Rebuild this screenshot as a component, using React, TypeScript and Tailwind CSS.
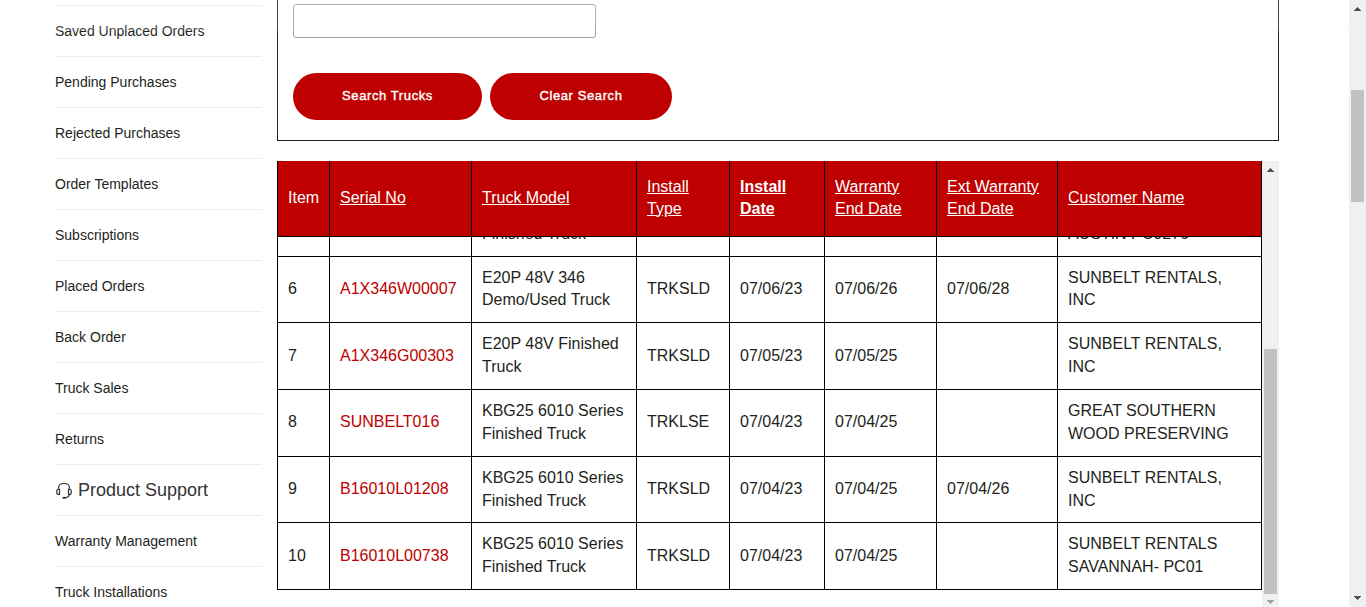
import React from "react";

const ordersMenu = [
  "Saved Unplaced Orders",
  "Pending Purchases",
  "Rejected Purchases",
  "Order Templates",
  "Subscriptions",
  "Placed Orders",
  "Back Order",
  "Truck Sales",
  "Returns",
];
const supportMenu = ["Warranty Management", "Truck Installations"];

const columns = "grid grid-cols-[52px_142px_165px_93px_95px_112px_121px_204px]";

const headers = [
  { lines: ["Item"], link: false, bold: false },
  { lines: ["Serial No"], link: true, bold: false },
  { lines: ["Truck Model"], link: true, bold: false },
  { lines: ["Install", "Type"], link: true, bold: false },
  { lines: ["Install", "Date"], link: true, bold: true },
  { lines: ["Warranty", "End Date"], link: true, bold: false },
  { lines: ["Ext Warranty", "End Date"], link: true, bold: false },
  { lines: ["Customer Name"], link: true, bold: false },
];

type Row = { size: string; single?: string; cells: string[][] };

const rows: Row[] = [
  {
    size: "h-[66px] leading-[22px]",
    cells: [["6"], ["A1X346W00007"], ["E20P 48V 346", "Demo/Used Truck"], ["TRKSLD"], ["07/06/23"], ["07/06/26"], ["07/06/28"], ["SUNBELT RENTALS,", "INC"]],
  },
  {
    size: "h-[67px] leading-[23px]",
    cells: [["7"], ["A1X346G00303"], ["E20P 48V Finished", "Truck"], ["TRKSLD"], ["07/05/23"], ["07/05/25"], [], ["SUNBELT RENTALS,", "INC"]],
  },
  {
    size: "h-[67px] leading-[23px]",
    single: "pb-[4px]",
    cells: [["8"], ["SUNBELT016"], ["KBG25 6010 Series", "Finished Truck"], ["TRKLSE"], ["07/04/23"], ["07/04/25"], [], ["GREAT SOUTHERN", "WOOD PRESERVING"]],
  },
  {
    size: "h-[66px] leading-[23px]",
    cells: [["9"], ["B16010L01208"], ["KBG25 6010 Series", "Finished Truck"], ["TRKSLD"], ["07/04/23"], ["07/04/25"], ["07/04/26"], ["SUNBELT RENTALS,", "INC"]],
  },
  {
    size: "h-[67px] leading-[23px]",
    cells: [["10"], ["B16010L00738"], ["KBG25 6010 Series", "Finished Truck"], ["TRKSLD"], ["07/04/23"], ["07/04/25"], [], ["SUNBELT RENTALS", "SAVANNAH- PC01"]],
  },
];

const clippedCells = ["", "", "Finished Truck", "", "", "", "", "AUSTIN PC0276"];

function HeadsetIcon() {
  return (
    <svg width="18" height="18" viewBox="0 0 18 18" fill="none" stroke="#333" strokeWidth="1.2" className="shrink-0">
      <path d="M3.4 7.5C3.4 4 5.6 2.5 9 2.5s5.6 1.5 5.6 5" />
      <path d="M4.5 8.1H3.7C2.6 8.1 1.8 8.9 1.8 10v1.5c0 1.2.8 2 1.9 2h.8z" />
      <path d="M13.5 8.1h.8c1.1 0 1.9.8 1.9 1.9v1.5c0 1.2-.8 2-1.9 2h-.8z" />
      <path d="M14.3 13.5c-.2 1.7-1.3 2.8-3.3 3" />
      <path d="M7.5 16.8H11" strokeWidth="1.8" />
    </svg>
  );
}

function Arrow({ up = false, muted = false }: { up?: boolean; muted?: boolean }) {
  return (
    <svg width="7" height="4" viewBox="0 0 7 4" shapeRendering="crispEdges" fill={muted ? "#a3a3a3" : "#505050"}>
      <path d={up ? "M3 0h1v1h1v1h1v1h1v1H0V3h1V2h1V1h1z" : "M0 0h7v1H6v1H5v1H4v1H3V3H2V2H1V1H0z"} />
    </svg>
  );
}

function MenuItem({ label }: { label: string }) {
  return (
    <li className="flex h-[51px] items-center border-b border-[#ececec] text-[14px] text-[#231f20]">
      <a href="#">{label}</a>
    </li>
  );
}

export default function App() {
  return (
    <div className="relative flex h-[607px] w-[1366px] overflow-hidden bg-white font-['Liberation_Sans',Arial,sans-serif] text-[#231f20]">
      <nav className="ml-[55px] w-[207px] shrink-0 pt-[5px]">
        <ul className="border-t border-[#ececec]">
          {ordersMenu.map((label) => (
            <MenuItem key={label} label={label} />
          ))}
          <li className="flex h-[51px] items-center gap-[5px] border-b border-[#ececec] text-[18px] text-[#333]">
            <HeadsetIcon />
            <span>Product Support</span>
          </li>
          {supportMenu.map((label) => (
            <MenuItem key={label} label={label} />
          ))}
        </ul>
      </nav>

      <main className="ml-[15px] flex w-[1002px] shrink-0 flex-col">
        <section className="h-[141px] border border-t-0 border-[#231f20] pl-[15px] pt-[4px]">
          <input className="block h-[34px] w-[303px] rounded-[3px] border border-[#a0a0a0] px-2 outline-none" />
          <div className="mt-[35px] flex gap-2 text-[13px] tracking-[0.6px] text-white [-webkit-text-stroke:0.4px_white]">
            <button className="h-[47px] w-[189px] rounded-full bg-[#be0000] pb-px">Search Trucks</button>
            <button className="h-[47px] w-[182px] rounded-full bg-[#be0000] pb-px">Clear Search</button>
          </div>
        </section>

        <section className="mt-5 flex h-[446px] items-start">
          <div className="w-[985px] border-l border-black text-[16px]">
            <div className={`${columns} h-[76px] border-b border-black bg-[#be0000] leading-[22px] text-white`}>
              {headers.map((h, i) => (
                <div key={i} className="flex flex-col items-start justify-center border-r border-black pb-[2px] pl-[10px]">
                  {h.lines.map((line) => (
                    <span key={line} className={`${h.link ? "underline" : ""} ${h.bold ? "font-bold" : ""}`}>
                      {line}
                    </span>
                  ))}
                </div>
              ))}
            </div>
            <div className={`${columns} h-[20px] border-b border-black`}>
              {clippedCells.map((text, i) => (
                <div key={i} className="flex h-[19px] items-start overflow-hidden whitespace-nowrap border-r border-black pl-[10px]">
                  <span className="-mt-[14px] leading-[22px]">{text}</span>
                </div>
              ))}
            </div>
            {rows.map((row) => (
              <div key={row.cells[0][0]} className={`${columns} ${row.size} border-b border-black`}>
                {row.cells.map((lines, i) => (
                  <div
                    key={i}
                    className={`flex flex-col justify-center whitespace-nowrap border-r border-black pl-[10px] ${
                      lines.length === 1 && row.single ? row.single : "pb-[2px]"
                    } ${i === 1 ? "text-[#be0000]" : ""}`}
                  >
                    {lines.map((line) => (
                      <span key={line}>{line}</span>
                    ))}
                  </div>
                ))}
              </div>
            ))}
          </div>
          <div className="flex w-[17px] flex-col items-center self-stretch bg-[#f0f0f0] pt-[7px]">
            <Arrow up />
            <div className="mt-[177px] h-[245px] w-[13px] bg-[#c1c1c1]" />
            <div className="mt-[6px]">
              <Arrow muted />
            </div>
          </div>
        </section>
      </main>

      <div className="ml-auto flex w-[17px] shrink-0 flex-col items-center bg-[#f0f0f0] pt-[7px]">
        <Arrow up />
        <div className="mt-[79px] h-[112px] w-[13px] bg-[#c1c1c1]" />
        <div className="mt-auto flex pb-[7px]">
          <Arrow />
        </div>
      </div>

      <div className="pointer-events-none absolute left-0 top-0 h-[31px] w-[1349px] border-b border-black/[0.015] bg-white/15" />
    </div>
  );
}
